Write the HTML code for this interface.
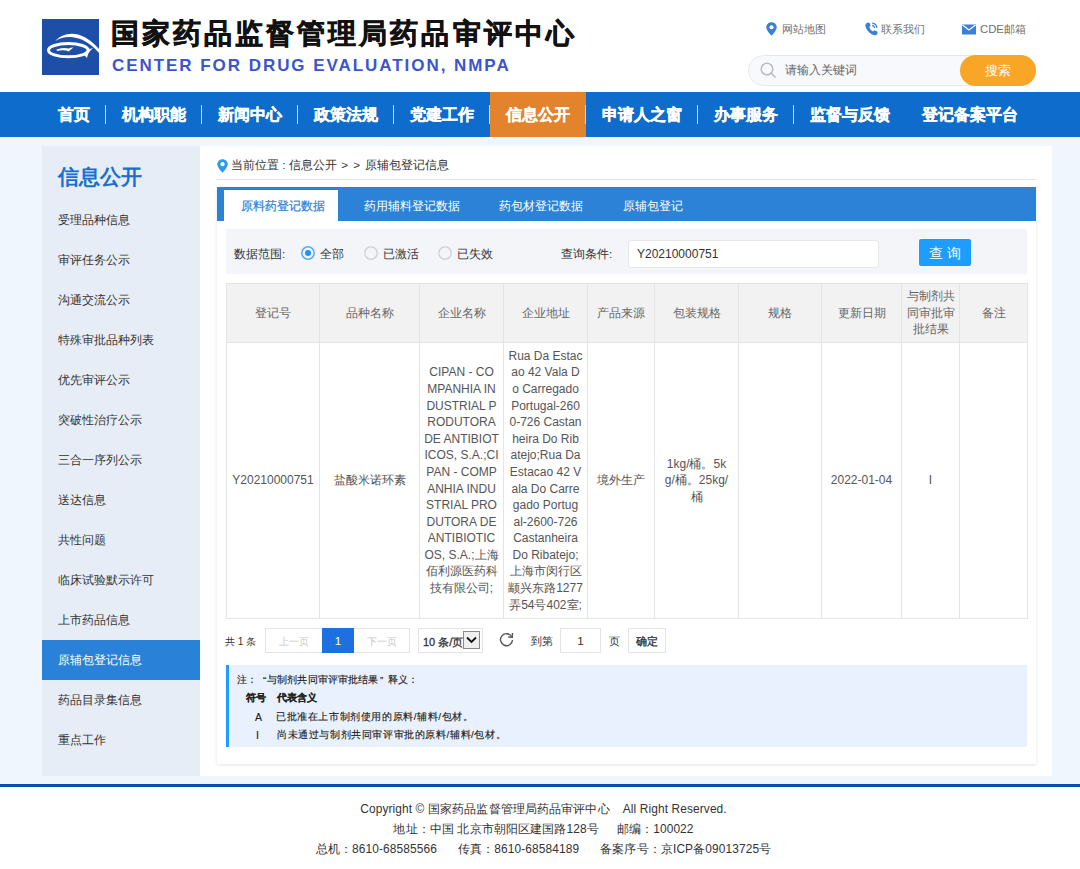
<!DOCTYPE html>
<html><head><meta charset="utf-8">
<style>
*{margin:0;padding:0;box-sizing:border-box}
html,body{width:1080px;height:869px;overflow:hidden;background:#fff;font-family:"Liberation Sans",sans-serif;color:#333}
.abs{position:absolute}
#logo{left:42px;top:19px;width:57px;height:56px;background:#1d4fa9;overflow:hidden}
#title{left:111px;top:14px;font-size:28px;font-weight:bold;color:#111;letter-spacing:3.05px;-webkit-text-stroke:0.6px #111;white-space:nowrap;line-height:40px}
#eng{left:112px;top:56px;font-size:17px;font-weight:bold;color:#3b55cc;letter-spacing:1.95px;white-space:nowrap;line-height:20px}
.tl{top:20px;font-size:11.3px;color:#707070;white-space:nowrap;line-height:18px}
#search{left:748px;top:55px;width:288px;height:31px;border:1px solid #e6e8ec;border-radius:16px;background:#f8f9fc}
#sbtn{left:960px;top:55px;width:76px;height:31px;border-radius:16px;background:#f9a526;color:#fff;font-size:13px;text-align:center;line-height:31px}
#nav{left:0;top:92px;width:1080px;height:45px;background:#0e6dcc}
.ni{position:absolute;top:0;height:45px;line-height:45px;color:#fff;font-size:15.8px;font-weight:bold;white-space:nowrap;text-align:center;-webkit-text-stroke:0.35px #fff}
.sep{position:absolute;top:13px;width:1px;height:19px;background:#c6dbf3}
#bg{left:0;top:137px;width:1080px;height:647px;background:#f0f6fe}
#side{left:42px;top:146px;width:158px;height:630px;background:#e7edf6}
#stitle{left:58px;top:164px;font-size:21.2px;font-weight:bold;color:#1a6fd0;line-height:26px;white-space:nowrap}
.si{position:absolute;left:42px;width:158px;height:40px;line-height:40px;padding-left:16px;font-size:11.7px;color:#333;white-space:nowrap}
.si.on{background:#2a82d8;color:#fff}
#panel{left:200px;top:146px;width:852px;height:630px;background:#fff}
#crumb{left:231px;top:157px;font-size:11.7px;color:#333;line-height:16px;white-space:nowrap}
#crumbline{left:217px;top:179px;width:819px;height:1px;background:#e3e3e3}
#card{left:217px;top:187px;width:819px;height:577px;background:#fff;box-shadow:0 1px 3px rgba(0,0,0,0.12)}
#tabs{left:217px;top:187px;width:819px;height:34px;background:#2b82d6}
.tab{position:absolute;top:3px;height:31px;line-height:31px;font-size:11.7px;color:#fff;white-space:nowrap}
.tab.on{background:#fff;color:#2b82d6;top:3px}
#filter{left:226px;top:229px;width:801px;height:45px;background:#f3f5f9}
.ft{position:absolute;top:0;line-height:49px;font-size:11.7px;color:#333;white-space:nowrap}
.radio{position:absolute;top:246px;width:14px;height:14px;border-radius:50%;border:1.6px solid #d2d2d2;background:transparent}
.radio.on{border-color:#55b0ff}
.radio.on:after{content:"";position:absolute;left:2.4px;top:2.4px;width:6px;height:6px;border-radius:50%;background:#1e90ff}
#qinput{left:628px;top:240px;width:251px;height:28px;background:#fff;border:1px solid #e5e7ea;border-radius:3px;font-size:12px;line-height:26px;padding-left:8px;color:#333}
#qbtn{left:919px;top:239px;width:52px;height:27px;background:#1d9dff;border-radius:2px;color:#fff;font-size:13.5px;line-height:29px;text-align:center;letter-spacing:4px;padding-left:4px}
table{position:absolute;left:226px;top:283px;border-collapse:collapse;table-layout:fixed;width:801px}
td,th{border:1px solid #e4e4e4;text-align:center;vertical-align:middle;font-size:11.7px;color:#666;font-weight:normal;line-height:16.6px;padding:0 4px}
th{background:#f2f2f2;height:59px}
tr.body td{height:276px;color:#555;font-size:12px}
.pg{position:absolute;top:628px;height:25px;line-height:27px;font-size:10.2px;white-space:nowrap}
#note{left:226px;top:665px;width:801px;height:82px;background:#e8f1fd;border-left:3px solid #1e9cff}
.nl{position:absolute;font-size:9.8px;color:#222;white-space:nowrap;line-height:14px;-webkit-text-stroke:0.15px #222}
#fline{left:0;top:784px;width:1080px;height:3px;background:#0c4ea8}
.fl{position:absolute;left:3.5px;width:1080px;text-align:center;font-size:11.9px;color:#333;line-height:20px;white-space:nowrap;letter-spacing:0.12px}
</style></head><body>
<div id="logo" class="abs"><svg width="57" height="56" viewBox="0 0 57 56">
<path d="M13.3 22 C22 12 40 10 57 30 L57 34 C42 16 24 15 13.3 22 Z" fill="#fff"/>
<ellipse cx="26.3" cy="31.2" rx="19.8" ry="6.6" fill="none" stroke="#fff" stroke-width="3"/>
<path d="M41 35 Q46 30 51 29 Q46 33 45 39 Z" fill="#fff"/>
<path d="M14.5 30.5 Q20 28 27 29.5 Q29 28 31.5 28.5 Q28 31 27 32.5 Q22 30.5 15 32 Z" fill="#fff"/>
</svg></div>
<div id="title" class="abs">国家药品监督管理局药品审评中心</div>
<div id="eng" class="abs">CENTER FOR DRUG EVALUATION, NMPA</div>

<svg class="abs" style="left:766px;top:22px" width="11" height="14" viewBox="0 0 11 14"><path d="M5.5 0.3C2.6 0.3 0.3 2.5 0.3 5.3 0.3 8.8 5.5 13.7 5.5 13.7S10.7 8.8 10.7 5.3C10.7 2.5 8.4 0.3 5.5 0.3Z" fill="#3b7fd9"/><circle cx="5.5" cy="5.2" r="2" fill="#fff"/></svg>
<div class="abs tl" style="left:782px">网站地图</div>
<svg class="abs" style="left:865px;top:22px" width="13" height="14" viewBox="0 0 13 14"><path d="M2.2 0.8 L4.3 0.5 L5.6 3.8 L4.2 5.2 Q5.3 8 8 9.6 L9.4 8.3 L12.6 9.7 L12.3 12 Q11.5 13.5 9.5 13.3 Q4.5 12.3 1.2 6.5 Q0 3.5 0.6 2 Z" fill="#3b7fd9"/><path d="M7.3 1.2 Q11.3 1.8 11.9 5.8" stroke="#3b7fd9" stroke-width="1.2" fill="none"/><path d="M7 3.4 Q9.4 3.8 9.8 6" stroke="#3b7fd9" stroke-width="1.2" fill="none"/></svg>
<div class="abs tl" style="left:881px">联系我们</div>
<svg class="abs" style="left:962px;top:24px" width="14" height="11" viewBox="0 0 14 11"><rect x="0" y="0.5" width="14" height="10" fill="#3b7fd9"/><path d="M0.5 1 L7 6 L13.5 1" stroke="#fff" stroke-width="1.2" fill="none"/></svg>
<div class="abs tl" style="left:980px">CDE邮箱</div>
<div id="search" class="abs"></div>
<div class="abs" style="left:785px;top:62px;font-size:12.3px;color:#666;line-height:16px">请输入关键词</div>
<svg class="abs" style="left:760px;top:62px" width="17" height="17" viewBox="0 0 17 17"><circle cx="7" cy="7" r="5.8" stroke="#b8bcc4" stroke-width="1.5" fill="none"/><path d="M11.3 11.3 L15.5 15.5" stroke="#b8bcc4" stroke-width="1.6"/></svg>
<div id="sbtn" class="abs">搜索</div>

<div id="nav" class="abs">
  <div class="ni" style="left:42px;width:64px">首页</div><div class="sep" style="left:105px"></div>
  <div class="ni" style="left:106px;width:96px">机构职能</div><div class="sep" style="left:201px"></div>
  <div class="ni" style="left:202px;width:96px">新闻中心</div><div class="sep" style="left:297px"></div>
  <div class="ni" style="left:298px;width:96px">政策法规</div><div class="sep" style="left:393px"></div>
  <div class="ni" style="left:394px;width:96px">党建工作</div><div class="sep" style="left:489px"></div>
  <div class="ni" style="left:490px;width:96px;background:#e3832b">信息公开</div><div class="sep" style="left:585px"></div>
  <div class="ni" style="left:586px;width:112px">申请人之窗</div><div class="sep" style="left:697px"></div>
  <div class="ni" style="left:698px;width:96px">办事服务</div><div class="sep" style="left:793px"></div>
  <div class="ni" style="left:794px;width:112px">监督与反馈</div>
  <div class="ni" style="left:906px;width:128px">登记备案平台</div>
</div>

<div id="bg" class="abs"></div>
<div id="side" class="abs"></div>
<div id="stitle" class="abs">信息公开</div>
<div class="si" style="top:200px">受理品种信息</div>
<div class="si" style="top:240px">审评任务公示</div>
<div class="si" style="top:280px">沟通交流公示</div>
<div class="si" style="top:320px">特殊审批品种列表</div>
<div class="si" style="top:360px">优先审评公示</div>
<div class="si" style="top:400px">突破性治疗公示</div>
<div class="si" style="top:440px">三合一序列公示</div>
<div class="si" style="top:480px">送达信息</div>
<div class="si" style="top:520px">共性问题</div>
<div class="si" style="top:560px">临床试验默示许可</div>
<div class="si" style="top:600px">上市药品信息</div>
<div class="si on" style="top:640px">原辅包登记信息</div>
<div class="si" style="top:680px">药品目录集信息</div>
<div class="si" style="top:720px">重点工作</div>

<div id="panel" class="abs"></div>
<svg class="abs" style="left:217px;top:159px" width="11" height="14" viewBox="0 0 11 14"><path d="M5.5 0.3C2.6 0.3 0.3 2.5 0.3 5.3 0.3 8.8 5.5 13.7 5.5 13.7S10.7 8.8 10.7 5.3C10.7 2.5 8.4 0.3 5.5 0.3Z" fill="#2b9af3"/><circle cx="5.5" cy="5.2" r="2.1" fill="#fff"/></svg>
<div id="crumb" class="abs">当前位置<span style="margin:0 3.3px">:</span>信息公开<span style="margin-left:4.3px">&gt;</span><span style="margin-left:5.3px">&gt;</span><span style="margin-left:4.8px">原辅包登记信息</span></div>
<div id="crumbline" class="abs"></div>
<div id="card" class="abs"></div>
<div id="tabs" class="abs">
  <div class="tab on" style="left:7px;width:114px;text-align:center;padding-left:3px;-webkit-text-stroke:0.2px #2b82d6">原料药登记数据</div>
  <div class="tab" style="left:147px">药用辅料登记数据</div>
  <div class="tab" style="left:282px">药包材登记数据</div>
  <div class="tab" style="left:406px">原辅包登记</div>
</div>
<div id="filter" class="abs"></div>
<div class="ft" style="left:234px;top:229px">数据范围:</div>
<svg class="abs" style="left:301px;top:246px" width="14" height="14" viewBox="0 0 14 14"><circle cx="7" cy="7" r="6.2" fill="none" stroke="#55b0ff" stroke-width="1.6"/><circle cx="7" cy="7" r="3" fill="#1e90ff"/></svg>
<div class="ft" style="left:320px;top:229px">全部</div>
<svg class="abs" style="left:364px;top:246px" width="14" height="14" viewBox="0 0 14 14"><circle cx="7" cy="7" r="6.2" fill="none" stroke="#d4d4d4" stroke-width="1.5"/></svg>
<div class="ft" style="left:383px;top:229px">已激活</div>
<svg class="abs" style="left:438px;top:246px" width="14" height="14" viewBox="0 0 14 14"><circle cx="7" cy="7" r="6.2" fill="none" stroke="#d4d4d4" stroke-width="1.5"/></svg>
<div class="ft" style="left:457px;top:229px">已失效</div>
<div class="ft" style="left:561px;top:229px">查询条件:</div>
<div id="qinput" class="abs">Y20210000751</div>
<div id="qbtn" class="abs">查询</div>

<table>
<colgroup><col style="width:93px"><col style="width:100px"><col style="width:84px"><col style="width:84px"><col style="width:67px"><col style="width:84px"><col style="width:83px"><col style="width:80px"><col style="width:58px"><col style="width:68px"></colgroup>
<tr><th>登记号</th><th>品种名称</th><th>企业名称</th><th>企业地址</th><th>产品来源</th><th>包装规格</th><th>规格</th><th>更新日期</th><th>与制剂共<br>同审批审<br>批结果</th><th>备注</th></tr>
<tr class="body"><td>Y20210000751</td><td>盐酸米诺环素</td>
<td>CIPAN - CO<br>MPANHIA IN<br>DUSTRIAL P<br>RODUTORA<br>DE ANTIBIOT<br>ICOS, S.A.;CI<br>PAN - COMP<br>ANHIA INDU<br>STRIAL PRO<br>DUTORA DE<br>ANTIBIOTIC<br>OS, S.A.;上海<br>佰利源医药科<br>技有限公司;</td>
<td>Rua Da Estac<br>ao 42 Vala D<br>o Carregado<br>Portugal-260<br>0-726 Castan<br>heira Do Rib<br>atejo;Rua Da<br>Estacao 42 V<br>ala Do Carre<br>gado Portug<br>al-2600-726<br>Castanheira<br>Do Ribatejo;<br>上海市闵行区<br>颛兴东路1277<br>弄54号402室;</td>
<td>境外生产</td><td>1kg/桶。5k<br>g/桶。25kg/<br>桶</td><td></td><td>2022-01-04</td><td>I</td><td></td></tr>
</table>

<div class="pg" style="left:225px;color:#333">共 1 条</div>
<div class="abs" style="left:265px;top:628px;width:145px;height:25px;border:1px solid #e4e4e4;background:#fff"></div>
<div class="pg" style="left:279px;color:#c8c8c8">上一页</div>
<div class="abs" style="left:322px;top:628px;width:32px;height:25px;background:#1e6fe0;color:#fff;font-size:11.7px;line-height:25px;text-align:center">1</div>
<div class="pg" style="left:367px;color:#c8c8c8">下一页</div>
<div class="abs" style="left:418px;top:628px;width:65px;height:25px;border:1px solid #e4e4e4;background:#fff"></div>
<div class="pg" style="left:423px;color:#333;font-size:11px;line-height:28px;-webkit-text-stroke:0.3px #333">10 条/页</div>
<div class="abs" style="left:463px;top:631px;width:17px;height:18px;border:1px solid #8a8a8a;background:#efefef"><svg width="15" height="17" viewBox="0 0 15 17" style="position:absolute;left:0;top:0"><path d="M3 5.5 L7.5 10 L12 5.5" stroke="#111" stroke-width="1.8" fill="none"/></svg></div>
<svg class="abs" style="left:499px;top:632px" width="15" height="15" viewBox="0 0 15 15"><path d="M12.6 4.5 A6 6 0 1 0 13.5 8" stroke="#555" stroke-width="1.4" fill="none"/><path d="M13.5 1 L13.3 5.3 L9.2 5" stroke="#555" stroke-width="1.4" fill="none"/></svg>
<div class="pg" style="left:531px;color:#333;font-size:10.8px">到第</div>
<div class="abs" style="left:560px;top:628px;width:41px;height:25px;border:1px solid #e4e4e4;background:#fff;font-size:11.7px;line-height:23px;text-align:center;color:#333">1</div>
<div class="pg" style="left:609px;color:#333;font-size:10.8px">页</div>
<div class="abs" style="left:628px;top:628px;width:38px;height:25px;border:1px solid #e4e4e4;background:#fff;font-size:10.5px;line-height:24px;text-align:center;color:#222;-webkit-text-stroke:0.25px #222">确定</div>

<div id="note" class="abs"></div>
<div class="nl" style="left:237px;top:673px">注：</div>
<div class="nl" style="left:263px;top:673px">“</div>
<div class="nl" style="left:267px;top:673px;letter-spacing:0.15px">与制剂共同审评审批结果</div>
<div class="nl" style="left:380px;top:673px">”</div>
<div class="nl" style="left:388px;top:673px">释义：</div>
<div class="nl" style="left:246px;top:691px;font-weight:bold">符号</div>
<div class="nl" style="left:277px;top:691px;font-weight:bold">代表含义</div>
<div class="nl" style="left:255px;top:710px;font-size:10.5px">A</div>
<div class="nl" style="left:276px;top:710px;letter-spacing:0.6px">已批准在上市制剂使用的原料/辅料/包材。</div>
<div class="nl" style="left:256px;top:728px;font-size:10.5px">I</div>
<div class="nl" style="left:277px;top:728px;letter-spacing:0.6px">尚未通过与制剂共同审评审批的原料/辅料/包材。</div>

<div id="fline" class="abs"></div>
<div class="fl" style="top:799px">Copyright © 国家药品监督管理局药品审评中心<span style="display:inline-block;width:13px"></span>All Right Reserved.</div>
<div class="fl" style="top:819px">地址：中国 北京市朝阳区建国路128号<span style="display:inline-block;width:18px"></span>邮编：100022</div>
<div class="fl" style="top:839px">总机：8610-68585566<span style="display:inline-block;width:21px"></span>传真：8610-68584189<span style="display:inline-block;width:21px"></span>备案序号：京ICP备09013725号</div>
</body></html>
